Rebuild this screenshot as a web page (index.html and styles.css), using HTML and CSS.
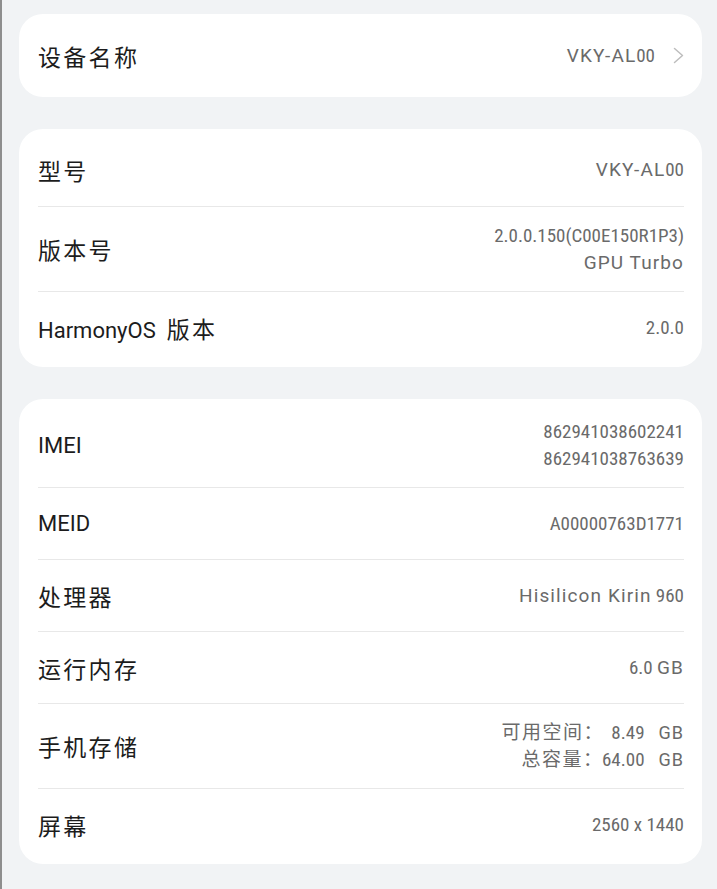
FILE: index.html
```html
<!DOCTYPE html>
<html lang="zh-CN">
  <head>
    <meta charset="UTF-8" />
    <meta name="viewport" content="width=device-width, initial-scale=1.0" />
    <title>关于手机</title>
    <link rel="stylesheet" href="styles.css">
  </head>
  <body>
    <section class="card card-single">
      <div class="row">
        <span class="label">设备名称</span>
        <span class="value value-link">
          <span><span class="w">VKY-AL</span>00</span>
          <svg class="chevron" width="11" height="17" viewBox="0 0 11 17">
            <polyline points="1.5,1.5 9.5,8.5 1.5,15.5" />
          </svg>
        </span>
      </div>
    </section>

    <section class="card">
      <div class="row">
        <span class="label">型号</span>
        <span class="value"><span class="w">VKY-AL</span>00</span>
      </div>
      <div class="row row-tall">
        <span class="label">版本号</span>
        <span class="value">
          <span class="line">2.0.0.150(C00E150R1P3)</span>
          <span class="line w">GPU Turbo</span>
        </span>
      </div>
      <div class="row">
        <span class="label"><span class="latin">HarmonyOS</span> 版本</span>
        <span class="value">2.0.0</span>
      </div>
    </section>

    <section class="card">
      <div class="row row-tall">
        <span class="label"><span class="latin">IMEI</span></span>
        <span class="value">
          <span class="line">862941038602241</span>
          <span class="line">862941038763639</span>
        </span>
      </div>
      <div class="row">
        <span class="label"><span class="latin">MEID</span></span>
        <span class="value">A00000763D1771</span>
      </div>
      <div class="row">
        <span class="label">处理器</span>
        <span class="value"><span class="w">Hisilicon Kirin</span> 960</span>
      </div>
      <div class="row">
        <span class="label">运行内存</span>
        <span class="value">6.0 <span class="w">GB</span></span>
      </div>
      <div class="row row-tall">
        <span class="label">手机存储</span>
        <span class="value">
          <span class="line"><span class="cjk">可用空间</span><span class="colon">：</span><span class="amt">8.49</span><span class="unit">GB</span></span>
          <span class="line"><span class="cjk">总容量</span><span class="colon">：</span><span class="amt">64.00</span><span class="unit">GB</span></span>
        </span>
      </div>
      <div class="row">
        <span class="label">屏幕</span>
        <span class="value">2560 x 1440</span>
      </div>
    </section>
  </body>
</html>
```
FILE: styles.css
```css
:root {
  --bg: #f1f3f5;
  --card: #ffffff;
  --text: #1c1c1c;
  --text-sub: #6a6a6a;
  --divider: #e8e8e8;
}

* {
  box-sizing: border-box;
}

body {
  margin: 0;
  min-height: 100vh;
  padding: 14px 15px 0 17px;
  background-color: var(--bg);
  border-left: 2px solid #8e8e8e;
  font-family: Roboto, "Noto Sans CJK SC", sans-serif;
  color: var(--text);
}

.card {
  background-color: var(--card);
  border-radius: 24px;
  padding: 4px 18px 4px 19px;
  margin-bottom: 32px;
}

.row {
  display: flex;
  justify-content: space-between;
  align-items: center;
  min-height: 72px;
  gap: 20px;
}

.row:first-child {
  min-height: 73px;
}

.row + .row {
  border-top: 1px solid var(--divider);
}

.row-tall {
  padding: 15px 0;
}

.card-single {
  padding: 0 18px 0 19px;
}

.card-single .row {
  min-height: 83px;
}

.label {
  font-size: 23px;
  letter-spacing: 2.3px;
  white-space: nowrap;
}

.label .latin {
  font-size: 22px;
  letter-spacing: 0;
  margin-right: 3px;
}

/* digits are narrow, words keep normal width */
.value {
  font-size: 19px;
  font-stretch: 75%;
  line-height: 27px;
  color: var(--text-sub);
  text-align: right;
  white-space: nowrap;
}

.value .w {
  font-size: 19px;
  font-stretch: 100%;
  letter-spacing: 1.1px;
}

.value .line {
  display: block;
}

.value .cjk {
  letter-spacing: 1.5px;
}

.value .amt {
  display: inline-block;
  min-width: 42px;
  text-align: right;
}

.value .unit {
  margin-left: 14px;
  font-size: 18px;
  font-stretch: 100%;
  letter-spacing: 1px;
}

.value-link {
  display: flex;
  align-items: center;
  gap: 18px;
}

.chevron {
  fill: none;
  stroke: #bdbdbd;
  stroke-width: 1.5;
  stroke-linecap: round;
  stroke-linejoin: round;
}
```
